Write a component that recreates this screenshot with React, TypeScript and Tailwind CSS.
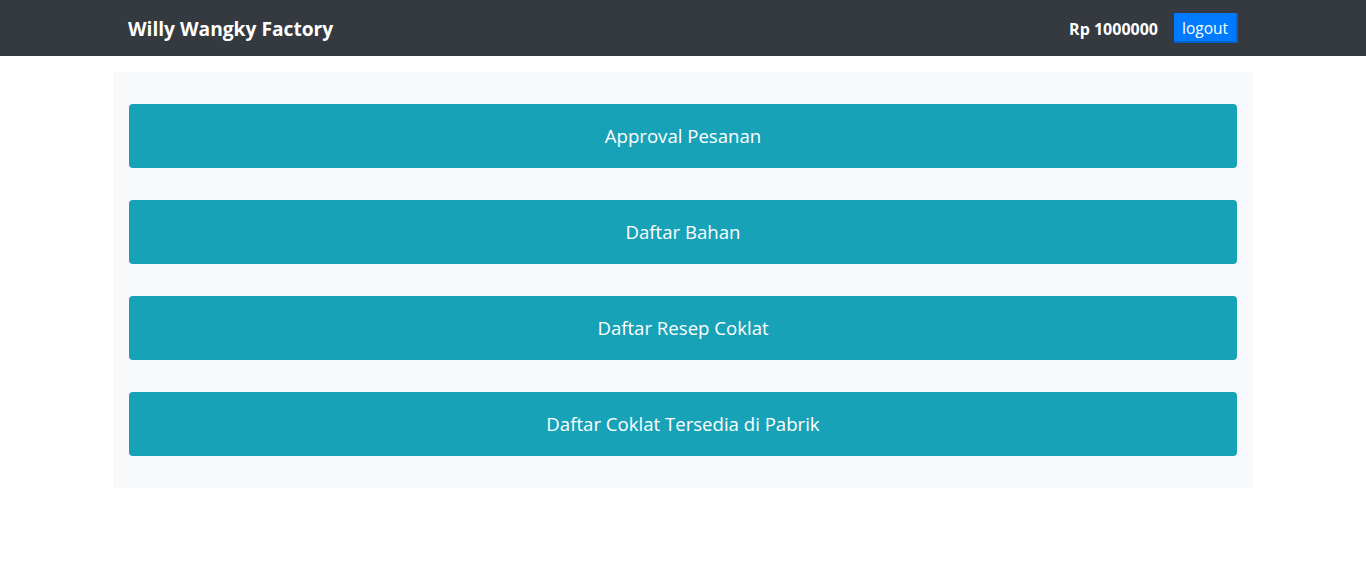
import React from 'react';

const menuItems = [
    'Approval Pesanan',
    'Daftar Bahan',
    'Daftar Resep Coklat',
    'Daftar Coklat Tersedia di Pabrik',
];

const App: React.FC = () => {
    return (
        <div className="min-h-screen bg-white" style={{fontFamily: '"Open Sans", "Noto Sans", sans-serif'}}>
            <nav className="h-14 bg-[#343a40]">
                <div className="mx-auto flex h-full w-[1140px] items-center justify-between px-[15px]">
                    <span className="mt-[2px] text-[19.2px] font-bold text-white">Willy Wangky Factory</span>
                    <div className="flex items-center">
                        <span className="mr-4 mt-[1px] text-[16px] font-bold text-white">Rp 1000000</span>
                        <button className="h-[30px] bg-[#007bff] px-2 pt-[3px] text-[15.5px] text-white border-b-2 border-r-2 border-[#0062cc]">
                            logout
                        </button>
                    </div>
                </div>
            </nav>
            <div className="mx-auto mt-4 flex w-[1140px] flex-col gap-8 bg-[#f8f9fa] px-4 py-8">
                {menuItems.map((item) => (
                    <button
                        key={item}
                        className="flex h-16 w-full items-center justify-center rounded bg-[#17a2b8] text-[18.6px] text-white"
                    >
                        {item}
                    </button>
                ))}
            </div>
        </div>
    );
};

export default App;
